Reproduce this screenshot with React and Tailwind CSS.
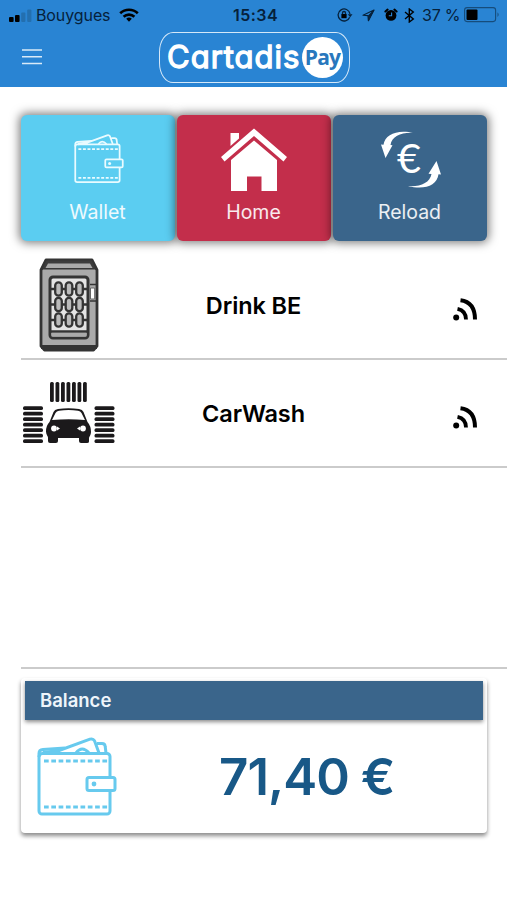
import React from 'react';

function StatusBar() {
  return (
    <div className="flex h-[30px] items-center pl-[9px] pr-[7px] text-[16px] leading-none text-[#06213b]">
      <svg width="23" height="13" viewBox="0 0 23 13" className="mr-[4px] shrink-0">
        <rect x="0" y="8" width="4.6" height="5" rx="1" fill="#000" />
        <rect x="6" y="6" width="4.6" height="7" rx="1" fill="#000" />
        <rect x="12.2" y="3.5" width="4.2" height="9.5" rx="1" fill="#236faf" />
        <rect x="18.2" y="0.5" width="4.2" height="12.5" rx="1" fill="#236faf" />
      </svg>
      <span className="w-[83px] shrink-0 whitespace-nowrap tracking-[-0.1px]">Bouygues</span>
      <svg width="20" height="14" viewBox="0 0 20 14" className="shrink-0" fill="none" stroke="#000" strokeWidth="2.6">
        <path d="M1.2 5.3a12.6 12.6 0 0 1 17.6 0" />
        <path d="M4.6 8.8a7.7 7.7 0 0 1 10.8 0" />
        <path d="M10 13.7l-2.8-2.9a4 4 0 0 1 5.6 0z" fill="#000" stroke="none" />
      </svg>
      <span className="ml-[94px] w-[104px] shrink-0 text-[16px] font-semibold tracking-[0.45px]">15:34</span>
      <svg width="16" height="14" viewBox="0 0 16 14" className="mr-[9px] shrink-0" fill="none" stroke="#06213b" strokeWidth="1.3">
        <path d="M12.7 9.2A6 6 0 1 1 13 5.8" />
        <path d="M10.8 6.3h4.7l-2.3 3z" fill="#06213b" stroke="none" />
        <rect x="4.4" y="6" width="5.2" height="4.2" fill="#000" stroke="none" />
        <path d="M5.5 6.3V5a1.5 1.5 0 0 1 3 0v1.3" />
      </svg>
      <svg width="13" height="13" viewBox="0 0 13 13" className="mr-[9px] shrink-0" fill="none" stroke="#06213b" strokeWidth="1.3" strokeLinejoin="round">
        <path d="M12 1L1 6.200l5 .4.500 5.200z" strokeWidth="1.1" />
        <path d="M12 1L6.300 6.600v4.800z" fill="#06213b" strokeWidth="0.800" />
      </svg>
      <svg width="14" height="14" viewBox="0 0 14 14" className="mr-[6px] shrink-0" fill="none">
        <circle cx="7" cy="7.4" r="5.4" fill="#000" />
        <path d="M1.400 3.500L3.600 1.600M12.600 3.500L10.400 1.600" stroke="#000" strokeWidth="2" strokeLinecap="round" />
        <path d="M7.6 4.4v3.4H4.8" stroke="#2984d3" strokeWidth="1.1" />
      </svg>
      <svg width="11" height="15" viewBox="0 0 11 15" className="mr-[7px] shrink-0" fill="none" stroke="#000" strokeWidth="1.4">
        <path d="M1 4l8.3 7-4 3V1l4 3L1 11" />
      </svg>
      <span className="mr-auto whitespace-nowrap tracking-[-0.2px]">37 %</span>
      <svg width="36" height="16" viewBox="0 0 36 16" className="shrink-0" fill="none">
        <rect x="0.6" y="0.6" width="31" height="14" rx="2.5" stroke="#164c7b" strokeWidth="1.1" />
        <rect x="2.5" y="2.5" width="11" height="10.5" rx="1" fill="#000" />
        <path d="M33.5 5.2q2.3 2.4 0 4.8z" fill="#164c7b" />
      </svg>
    </div>
  );
}

function Logo() {
  return (
    <div className="flex h-[51px] w-[191px] items-center rounded-[14px/20px] border-[1.5px] border-[#d5e8f8] pl-[7px]">
      <span className="w-[135px] shrink-0 whitespace-nowrap pb-[2px] text-[31px] font-normal leading-none tracking-[1px] text-white [-webkit-text-stroke:1.3px_white] [font-feature-settings:'cv11','ss03']">
        Cartadis
      </span>
      <span className="flex h-[41px] w-[41px] shrink-0 items-center justify-center rounded-full bg-white font-['Open_Sans','Noto_Sans',sans-serif] text-[21px] font-bold leading-none tracking-[-0.7px] text-[#2877bd]">
        Pay
      </span>
    </div>
  );
}

function WalletIcon({ className, thin }) {
  return (
    <svg viewBox="0 0 80 80" className={className} fill="none" stroke="currentColor" strokeWidth={thin ? 2.8 : 3} strokeLinejoin="round">
      <path d="M73 40V19.5a3 3 0 0 0-3-3H5.500a3.500 3.500 0 0 0-3.500 3.500v54a3 3 0 0 0 3 3h65a3 3 0 0 0 3-3V54" />
      <path d="M2 20v-3.500Q2 13 6 12.600L28 11M18 15L53 2.200q3-1 4.500 1.500L62 16M60 6.500h5q3 0 3.200 3L69 16M39 16q6-8 13 0" />
      <path d="M6 16L22 14" strokeWidth="4" />
      <path d="M7 24h64M7 70h64" strokeDasharray="4.700 2.600" />
      <rect x="50" y="40.500" width="28" height="13" rx="2" />
      <circle cx="57" cy="47" r="2.400" fill="currentColor" stroke="none" />
    </svg>
  );
}

function HomeIcon() {
  return (
    <svg viewBox="0 0 66 64" className="h-[64px] w-[66px]" fill="#fff">
      <path d="M9.500 5h8.500v5.500L9.500 18z" />
      <path d="M33 0.500L66 29l-3.500 4.500L33 8 3.500 33.500 0 29z" />
      <path d="M33 12.500L56 32v31H40.500V48.500h-14.500V63h-16V32z" />
    </svg>
  );
}

function ReloadIcon() {
  return (
    <svg viewBox="0 0 62 60" className="ml-[2px] h-[60px] w-[62px]" fill="#fff">
      <path d="M34 3C22 2 12 6 10.500 15l2 .200L5.500 28 1 14.500l2.500.3C5 4 18-1 34 3z" />
      <path d="M28 56c12 1 22-3 23.500-12l-3-.2L56.500 31 61 44.500l-2.500-.3C57 56 44 60 28 56z" />
      <text x="17" y="43" fontSize="41" fontFamily="Lato, sans-serif" textLength="24" lengthAdjust="spacingAndGlyphs">€</text>
    </svg>
  );
}

function Tile({ label, color, children }) {
  return (
    <div className={`flex h-[126px] flex-1 flex-col items-center rounded-[6px] pr-[1px] shadow-[0_0_10px_2px_rgba(0,0,0,0.5)] ${color}`}>
      <div className="flex h-[86px] items-center pt-[4px]">{children}</div>
      <span className="text-[19.500px] leading-[23px] text-white/90">{label}</span>
    </div>
  );
}

function VendingIcon() {
  return (
    <svg viewBox="0 0 60 94" className="h-[94px] w-[60px]" fill="none" stroke="#343434" strokeLinejoin="round">
      <path d="M7 2h46l5 10v76l-3.500 4H5.500L2 88V12z" fill="#aaa" strokeWidth="2.800" />
      <path d="M3 11L7 2h46l4 9z" fill="#3c3c3c" />
      <path d="M6.500 10l2.500-4.500h42l2.500 4.500z" fill="#aaa" stroke="none" />
      <path d="M2 89h56" strokeWidth="4" />
      <rect x="11" y="19" width="38" height="61" rx="3" fill="#e4e4e4" strokeWidth="3" />
      <path d="M12 73.500h36" strokeWidth="2.500" />
      <path d="M12.500 75h35v3.500h-35z" fill="#aaa" stroke="none" />
      {[31, 46.5, 62].map((y) => (
        <g key={y}>
          <path d={`M12 ${y}h36`} strokeWidth="2.500" />
          {[19.5, 30, 40.5].map((x) => (
            <rect key={x} x={x - 3.3} y={y - 6.7} width="6.600" height="13.400" rx="3.200" fill="#bbb" strokeWidth="2.300" />
          ))}
        </g>
      ))}
      <path d="M51 26.500h6M51 43h6" strokeWidth="1.500" />
      <rect x="51.500" y="30" width="4.200" height="11" fill="#fff" stroke="#666" strokeWidth="1" />
    </svg>
  );
}

function CarWashIcon() {
  return (
    <svg viewBox="0 0 92 62" className="h-[62px] w-[92px]" fill="#1b191b">
      {[28.5, 34, 39.5, 45, 50.5, 56, 61.5].map((x) => (
        <rect key={x} x={x - 1.5} y="0" width="3.800" height="20" rx="1.500" />
      ))}
      {[25.5, 31, 36.5, 42, 47.5, 53, 58.5].map((y) => (
        <g key={y}>
          <rect x="0" y={y - 1.2} width="20" height="3.800" rx="1.700" />
          <rect x="71.500" y={y - 1.2} width="20" height="3.800" rx="1.700" />
        </g>
      ))}
      <path d="M26.500 40L30.500 30Q31.500 27.500 35 27q10.500-1.500 21 0 3.500.5 4.500 3l4 10q3.500 4 3.500 10c0 3-2 5-2 6v3.500q0 1.500-2 1.500h-6q-2 0-2-2v-3H35v3q0 2-2 2h-6q-2 0-2-2v-3.500c0-1-2-3-2-6q0-6 3.500-9.500z" />
      <path d="M29 38L32.500 31q1-1.800 3.500-2.200 9.500-1.500 19 0 2.500.4 3.500 2.200l3.500 7Q46 36.500 29 38z" fill="#fff" />
      <g fill="#fff">
        <circle cx="31" cy="46.500" r="2.900" />
        <path d="M34 44.500l3 2-3 2zM57 44.500l-3 2 3 2z" />
        <circle cx="60" cy="46.500" r="2.900" />
      </g>
    </svg>
  );
}

function SignalIcon() {
  return (
    <svg viewBox="0 0 25 23" className="h-[23px] w-[25px]" fill="none" stroke="#000" strokeWidth="4">
      <circle cx="3.200" cy="19.500" r="3" fill="#000" stroke="none" />
      <path d="M4.500 10.800Q13 12.500 13 21.500" strokeWidth="3.800" />
      <path d="M7.500 2.200Q22 4 22 21.500" />
    </svg>
  );
}

function DeviceRow({ name, children }) {
  return (
    <li className="flex h-[108px] items-center border-b-2 border-[#cbcbcb]">
      <div className="flex w-[95px] shrink-0 items-center justify-center">{children}</div>
      <span className="mr-[62px] flex-1 pt-[1px] text-center text-[23.500px] font-semibold tracking-[-0.1px] text-black">{name}</span>
      <div className="mr-[29px] flex w-[25px] shrink-0 pt-[8px]">
        <SignalIcon />
      </div>
    </li>
  );
}

export default function App() {
  return (
    <div className="h-[900px] w-[507px] overflow-hidden bg-white font-['Inter','Liberation_Sans',sans-serif]">
      <header className="h-[87px] bg-[#2984d3]">
        <StatusBar />
        <div className="flex h-[54px] items-center">
          <svg width="20" height="18" viewBox="0 0 20 18" className="ml-[22px] mr-[117px] shrink-0" stroke="#d9eaf8" strokeWidth="1.600">
            <path d="M0 2h20M0 8.800h20M0 15.500h20" />
          </svg>
          <Logo />
        </div>
      </header>

      <nav className="mt-[28px] flex gap-[2px] pl-[21px] pr-[20px]">
        <Tile label="Wallet" color="bg-[#5bcdf1]">
          <WalletIcon className="-mt-[3px] ml-[2px] h-[50px] w-[50px] text-[#e9fbff]" thin />
        </Tile>
        <Tile label="Home" color="bg-[#c32e4b]">
          <HomeIcon />
        </Tile>
        <Tile label="Reload" color="bg-[#3a658b]">
          <ReloadIcon />
        </Tile>
      </nav>

      <ul className="ml-[21px] mt-[11px] h-[417px] border-b-2 border-[#cbcbcb]">
        <DeviceRow name="Drink BE">
          <VendingIcon />
        </DeviceRow>
        <DeviceRow name="CarWash">
          <CarWashIcon />
        </DeviceRow>
      </ul>

      <section className="ml-[21px] mt-[9px] h-[155px] w-[466px] rounded-[4px] bg-white px-[4px] pt-[3px] shadow-[0_3px_4px_rgba(0,0,0,0.45)]">
        <h2 className="flex h-[39px] items-center bg-[#3a658b] pl-[15px] text-[18.500px] font-semibold text-[#eef5fb] shadow-[0_2px_4px_rgba(0,0,0,0.45)]">
          Balance
        </h2>
        <div className="flex h-[113px] items-center">
          <WalletIcon className="ml-[12px] h-[80px] w-[80px] shrink-0 text-[#67caee]" />
          <span className="ml-[102px] whitespace-nowrap text-[51px] font-semibold leading-none tracking-[-1px] text-[#185887]">71,40 €</span>
        </div>
      </section>
    </div>
  );
}
